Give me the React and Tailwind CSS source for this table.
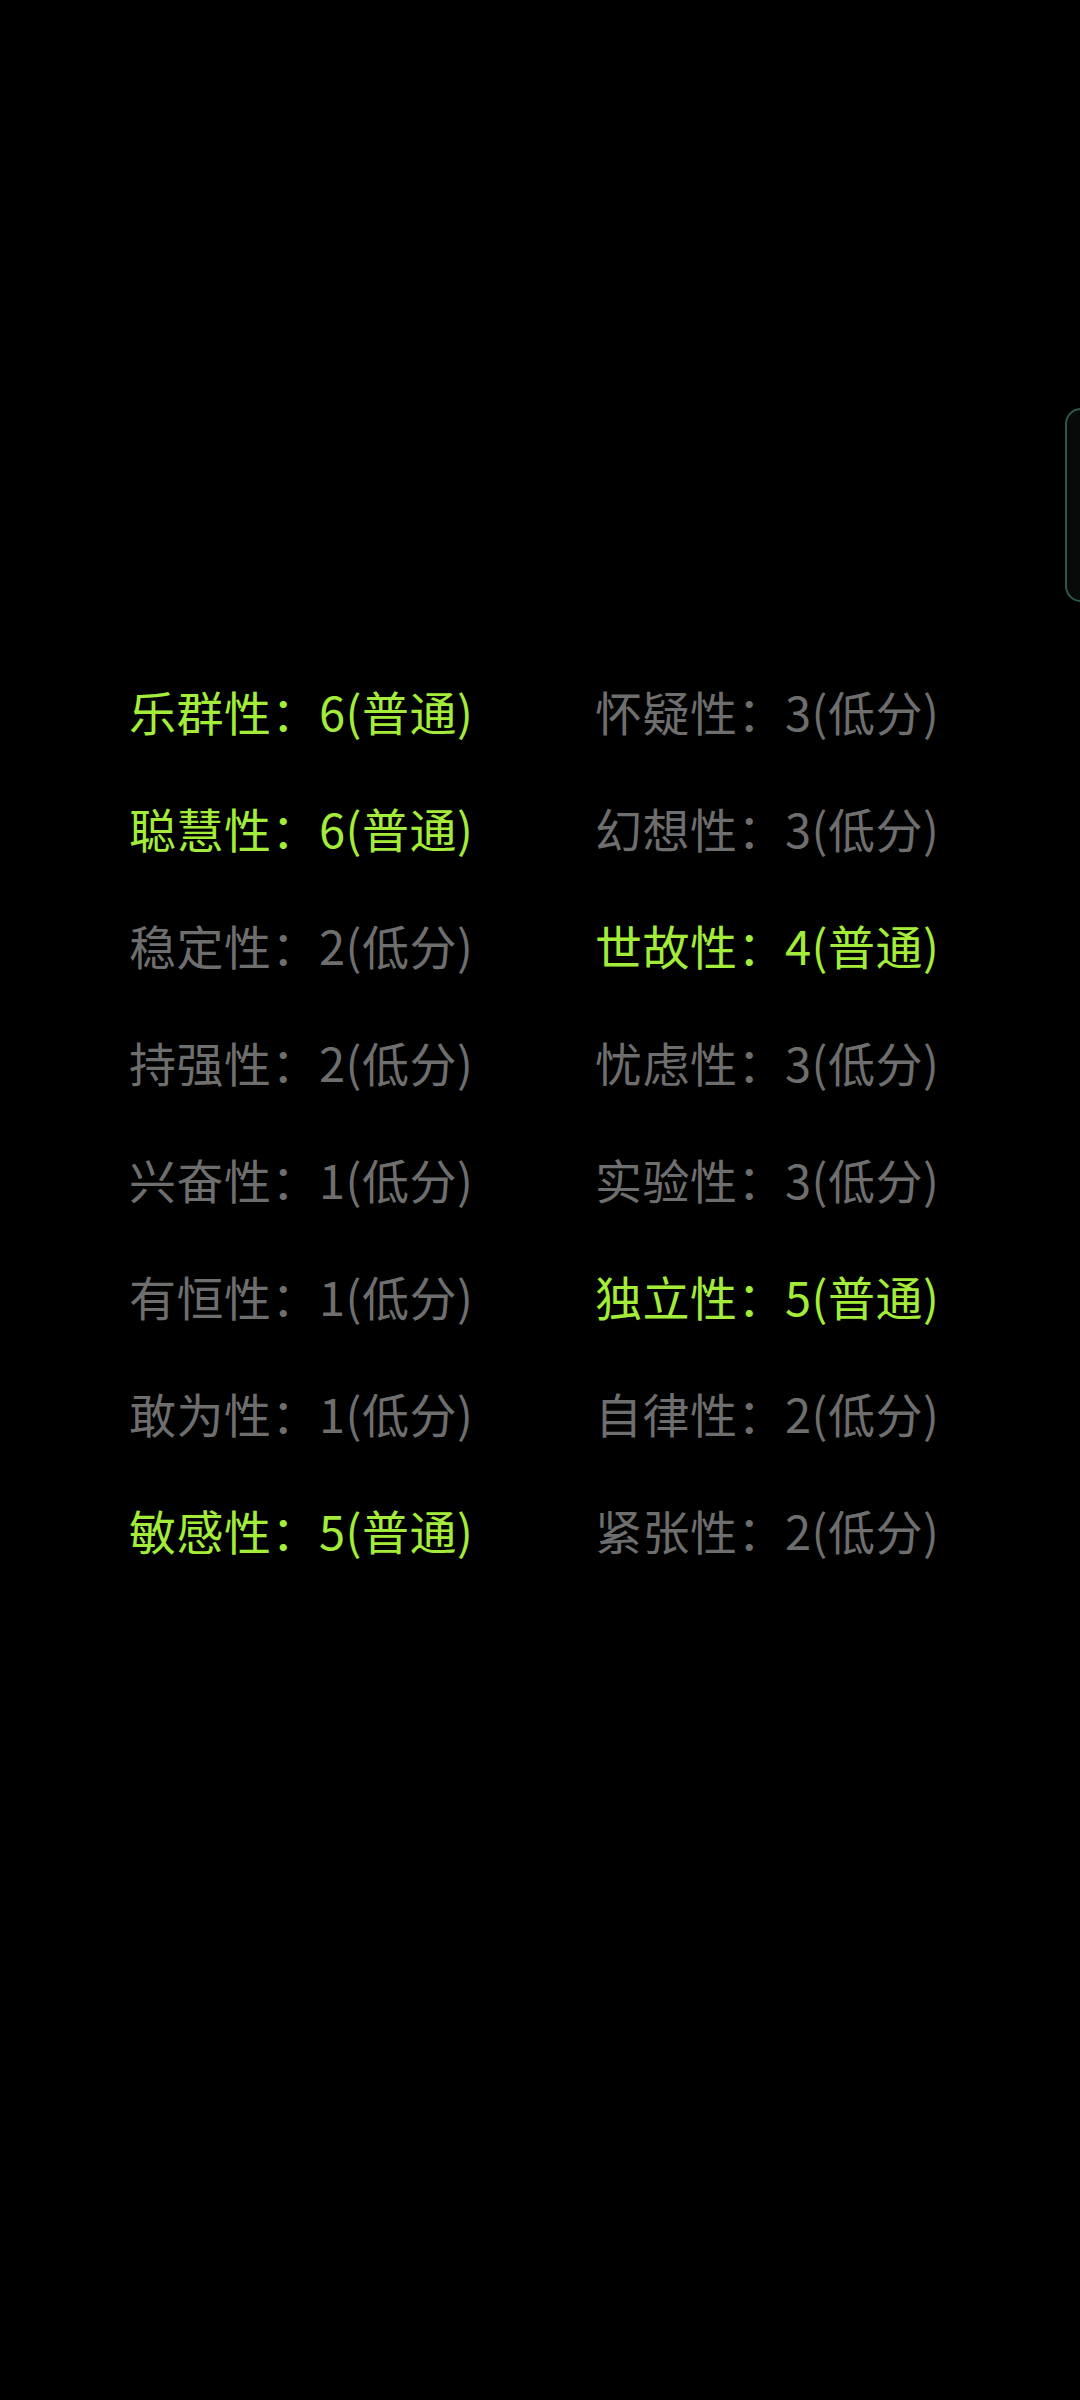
import React from 'react';

const traits = [
    ['乐群性', 6, '普通', true], ['怀疑性', 3, '低分', false],
    ['聪慧性', 6, '普通', true], ['幻想性', 3, '低分', false],
    ['稳定性', 2, '低分', false], ['世故性', 4, '普通', true],
    ['持强性', 2, '低分', false], ['忧虑性', 3, '低分', false],
    ['兴奋性', 1, '低分', false], ['实验性', 3, '低分', false],
    ['有恒性', 1, '低分', false], ['独立性', 5, '普通', true],
    ['敢为性', 1, '低分', false], ['自律性', 2, '低分', false],
    ['敏感性', 5, '普通', true], ['紧张性', 2, '低分', false],
];

const TraitItem = ({ name, score, level, highlight }) => (
    <div className={`h-[117px] flex items-center whitespace-nowrap ${highlight ? 'text-[#a4ec3a]' : 'text-[#6e6e6e]'}`}>
        {name}：{score}({level})
    </div>
);

export default function App() {
    return (
        <div
            className="relative w-[1080px] h-[2400px] bg-black overflow-hidden text-[47px] tracking-[0.5px] leading-[117px]"
            style={{ fontFamily: '"Noto Sans CJK SC", "Noto Sans", sans-serif' }}
        >
            <div className="absolute left-[1065px] top-[408px] w-[40px] h-[194px] rounded-[16px] border-2 border-[#2e5746] bg-[#080a09]" />
            <div className="pt-[652px] pl-[129px] grid grid-cols-[466px_1fr]">
                {traits.map(([name, score, level, highlight]) => (
                    <TraitItem key={name} name={name} score={score} level={level} highlight={highlight} />
                ))}
            </div>
        </div>
    );
}
